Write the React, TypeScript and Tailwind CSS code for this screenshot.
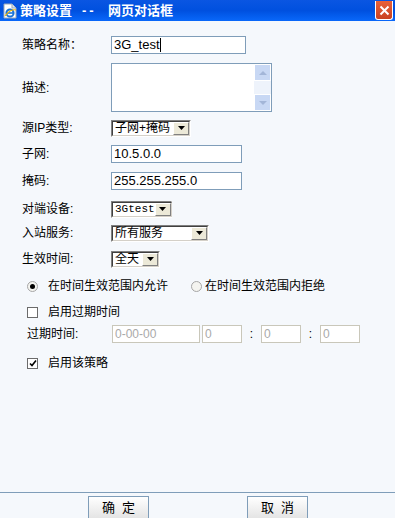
import React from "react";

const font = { fontFamily: "'Liberation Sans','Noto Sans CJK SC',sans-serif" };

// classic sunken select with a raised arrow button
function Select({ value, width, mono }: { value: string; width: string; mono?: boolean }) {
  return (
    <div
      className={`${width} h-[17px] flex border-t border-l border-t-[#808080] border-l-[#808080] border-b border-r border-b-[#ffffff] border-r-[#ffffff] bg-white`}
    >
      <div className="flex-1 flex border-t border-l border-t-[#404040] border-l-[#404040] border-b border-r border-b-[#d4d0c8] border-r-[#d4d0c8]">
        <span
          className={`flex-1 pl-[2px] leading-[13px] text-black ${mono ? "text-[11px]" : "text-[12px]"}`}
          style={mono ? { fontFamily: "'Liberation Mono',monospace" } : undefined}
        >
          {value}
        </span>
        <div className="w-[16px] h-[13px] bg-[#ece9d8] border-t border-l border-t-white border-l-white border-b border-r border-b-[#808080] border-r-[#808080] flex items-center justify-center">
          <svg width="7" height="4" viewBox="0 0 7 4">
            <path d="M0 0h7L3.5 4z" fill="#000" />
          </svg>
        </div>
      </div>
    </div>
  );
}

function TextInput({ value, width, caret }: { value: string; width: string; caret?: boolean }) {
  return (
    <div className={`${width} h-[18px] border border-[#7f9db9] bg-white flex items-center pl-[2px] text-[13px] text-black`}>
      <span>{value}</span>
      {caret && <span className="w-px h-[14px] bg-black" />}
    </div>
  );
}

function DisabledInput({ value, width }: { value: string; width: string }) {
  return (
    <div className={`${width} h-[18px] border border-[#c9c7ba] bg-white flex items-center pl-[2px] text-[12px] text-[#a9a9a9]`}>
      {value}
    </div>
  );
}

function Radio({ checked }: { checked?: boolean }) {
  return (
    <div className="w-[11px] h-[11px] rounded-full border border-[#a6a6a6] bg-[#f4f4f0] flex items-center justify-center">
      {checked && <div className="w-[5px] h-[5px] rounded-full bg-black" />}
    </div>
  );
}

function Checkbox({ checked }: { checked?: boolean }) {
  return (
    <div className="w-[11px] h-[11px] border border-[#6b6b6b] bg-white flex items-center justify-center">
      {checked && (
        <svg width="8" height="7" viewBox="0 0 8 7">
          <path d="M1 3.5l2 2 4-5" stroke="#000" strokeWidth="1.6" fill="none" />
        </svg>
      )}
    </div>
  );
}

function Row({ label, children, className }: { label: string; children: React.ReactNode; className: string }) {
  return (
    <div className={`flex items-center ${className}`}>
      <span className="w-[89px] text-[12px] text-black">{label}</span>
      {children}
    </div>
  );
}

export default function App() {
  return (
    <div className="w-[395px] h-[518px] flex flex-col bg-[#f5f8fc] overflow-hidden" style={font}>
      {/* Title bar */}
      <div className="h-[21px] flex items-center bg-gradient-to-b from-[#0a56e2] via-[#0050df] to-[#0a68fa]">
        <svg width="16" height="16" viewBox="0 0 16 16" className="ml-[2px] mt-[1px]">
          <path d="M2 1h8l4 4v10H2z" fill="#fff" stroke="#9aa7b8" strokeWidth="1" />
          <path d="M10 1v4h4" fill="#dde4ee" stroke="#9aa7b8" strokeWidth="1" />
          <circle cx="8" cy="10" r="3.6" fill="none" stroke="#1a73d9" strokeWidth="2" />
          <path d="M4.5 10h7" stroke="#1a73d9" strokeWidth="1.6" />
          <path d="M3 13c3-5 8-7 11-6" stroke="#f2b400" strokeWidth="1.2" fill="none" />
        </svg>
        <div className="ml-[2px] flex items-center text-[13px] font-bold text-white">
          <span>策略设置</span>
          <span className="ml-[10px] w-[18px] tracking-[3px]">--</span>
          <span className="ml-[8px]">网页对话框</span>
        </div>
        <div className="ml-auto mr-[2px] w-[18px] h-[19px] rounded-b-[3px] border border-t-0 border-white bg-gradient-to-b from-[#e8613a] to-[#c94120] flex items-center justify-center">
          <svg width="11" height="11" viewBox="0 0 11 11">
            <path d="M1.5 1.5l8 8M9.5 1.5l-8 8" stroke="#fff" strokeWidth="2" />
          </svg>
        </div>
      </div>

      {/* Form */}
      <div className="pl-[22px] flex flex-col">
        <Row label="策略名称：" className="mt-[15px]">
          <TextInput value="3G_test" width="w-[135px]" caret />
        </Row>

        <Row label="描述:" className="mt-[9px]">
          <div className="w-[161px] h-[49px] border border-[#7f9db9] bg-white flex">
            <div className="flex-1" />
            <div className="w-[17px] bg-[#eef3fb] flex flex-col justify-between">
              <div className="h-[17px] bg-[#c8d8f4] border border-[#ffffff] flex items-center justify-center">
                <svg width="8" height="4" viewBox="0 0 8 4">
                  <path d="M0 4h8L4 0z" fill="#a3b6d8" />
                </svg>
              </div>
              <div className="h-[17px] bg-[#c8d8f4] border border-[#ffffff] flex items-center justify-center">
                <svg width="8" height="4" viewBox="0 0 8 4">
                  <path d="M0 0h8L4 4z" fill="#a3b6d8" />
                </svg>
              </div>
            </div>
          </div>
        </Row>

        <Row label="源IP类型:" className="mt-[7px]">
          <Select value="子网+掩码" width="w-[80px]" />
        </Row>

        <Row label="子网:" className="mt-[8px]">
          <TextInput value="10.5.0.0" width="w-[131px]" />
        </Row>

        <Row label="掩码:" className="mt-[9px]">
          <TextInput value="255.255.255.0" width="w-[131px]" />
        </Row>

        <Row label="对端设备:" className="mt-[10px]">
          <Select value="3Gtest" width="w-[61px]" mono />
        </Row>

        <Row label="入站服务:" className="mt-[6px]">
          <Select value="所有服务" width="w-[98px]" />
        </Row>

        <Row label="生效时间:" className="mt-[8px]">
          <Select value="全天" width="w-[49px]" />
        </Row>

        {/* Allow / deny radio row */}
        <div className="mt-[11px] h-[14px] flex items-center text-[12px] text-black">
          <div className="ml-[5px]">
            <Radio checked />
          </div>
          <span className="ml-[10px]">在时间生效范围内允许</span>
          <div className="ml-[23px]">
            <Radio />
          </div>
          <span className="ml-[3px]">在时间生效范围内拒绝</span>
        </div>

        <div className="mt-[12px] h-[14px] flex items-center text-[12px] text-black">
          <div className="ml-[5px]">
            <Checkbox />
          </div>
          <span className="ml-[10px]">启用过期时间</span>
        </div>

        <div className="mt-[6px] flex items-center text-[12px] text-black">
          <span className="ml-[5px] w-[85px]">过期时间:</span>
          <DisabledInput value="0-00-00" width="w-[88px]" />
          <div className="ml-[2px]">
            <DisabledInput value="0" width="w-[40px]" />
          </div>
          <span className="w-[19px] text-center">:</span>
          <DisabledInput value="0" width="w-[40px]" />
          <span className="w-[19px] text-center">:</span>
          <DisabledInput value="0" width="w-[40px]" />
        </div>

        <div className="mt-[13px] h-[14px] flex items-center text-[12px] text-black">
          <div className="ml-[5px]">
            <Checkbox checked />
          </div>
          <span className="ml-[10px]">启用该策略</span>
        </div>
      </div>

      <div className="flex-1" />

      {/* Footer */}
      <div className="h-[26px] border-t border-[#7f9db9] flex items-start pt-[3px]">
        <button className="ml-[88px] w-[61px] h-[24px] border border-[#7f9db9] bg-gradient-to-b from-white to-[#e3e3e3] text-[13px] text-black whitespace-pre">
          确  定
        </button>
        <button className="ml-[98px] w-[61px] h-[24px] border border-[#7f9db9] bg-gradient-to-b from-white to-[#e3e3e3] text-[13px] text-black whitespace-pre">
          取  消
        </button>
      </div>
    </div>
  );
}
